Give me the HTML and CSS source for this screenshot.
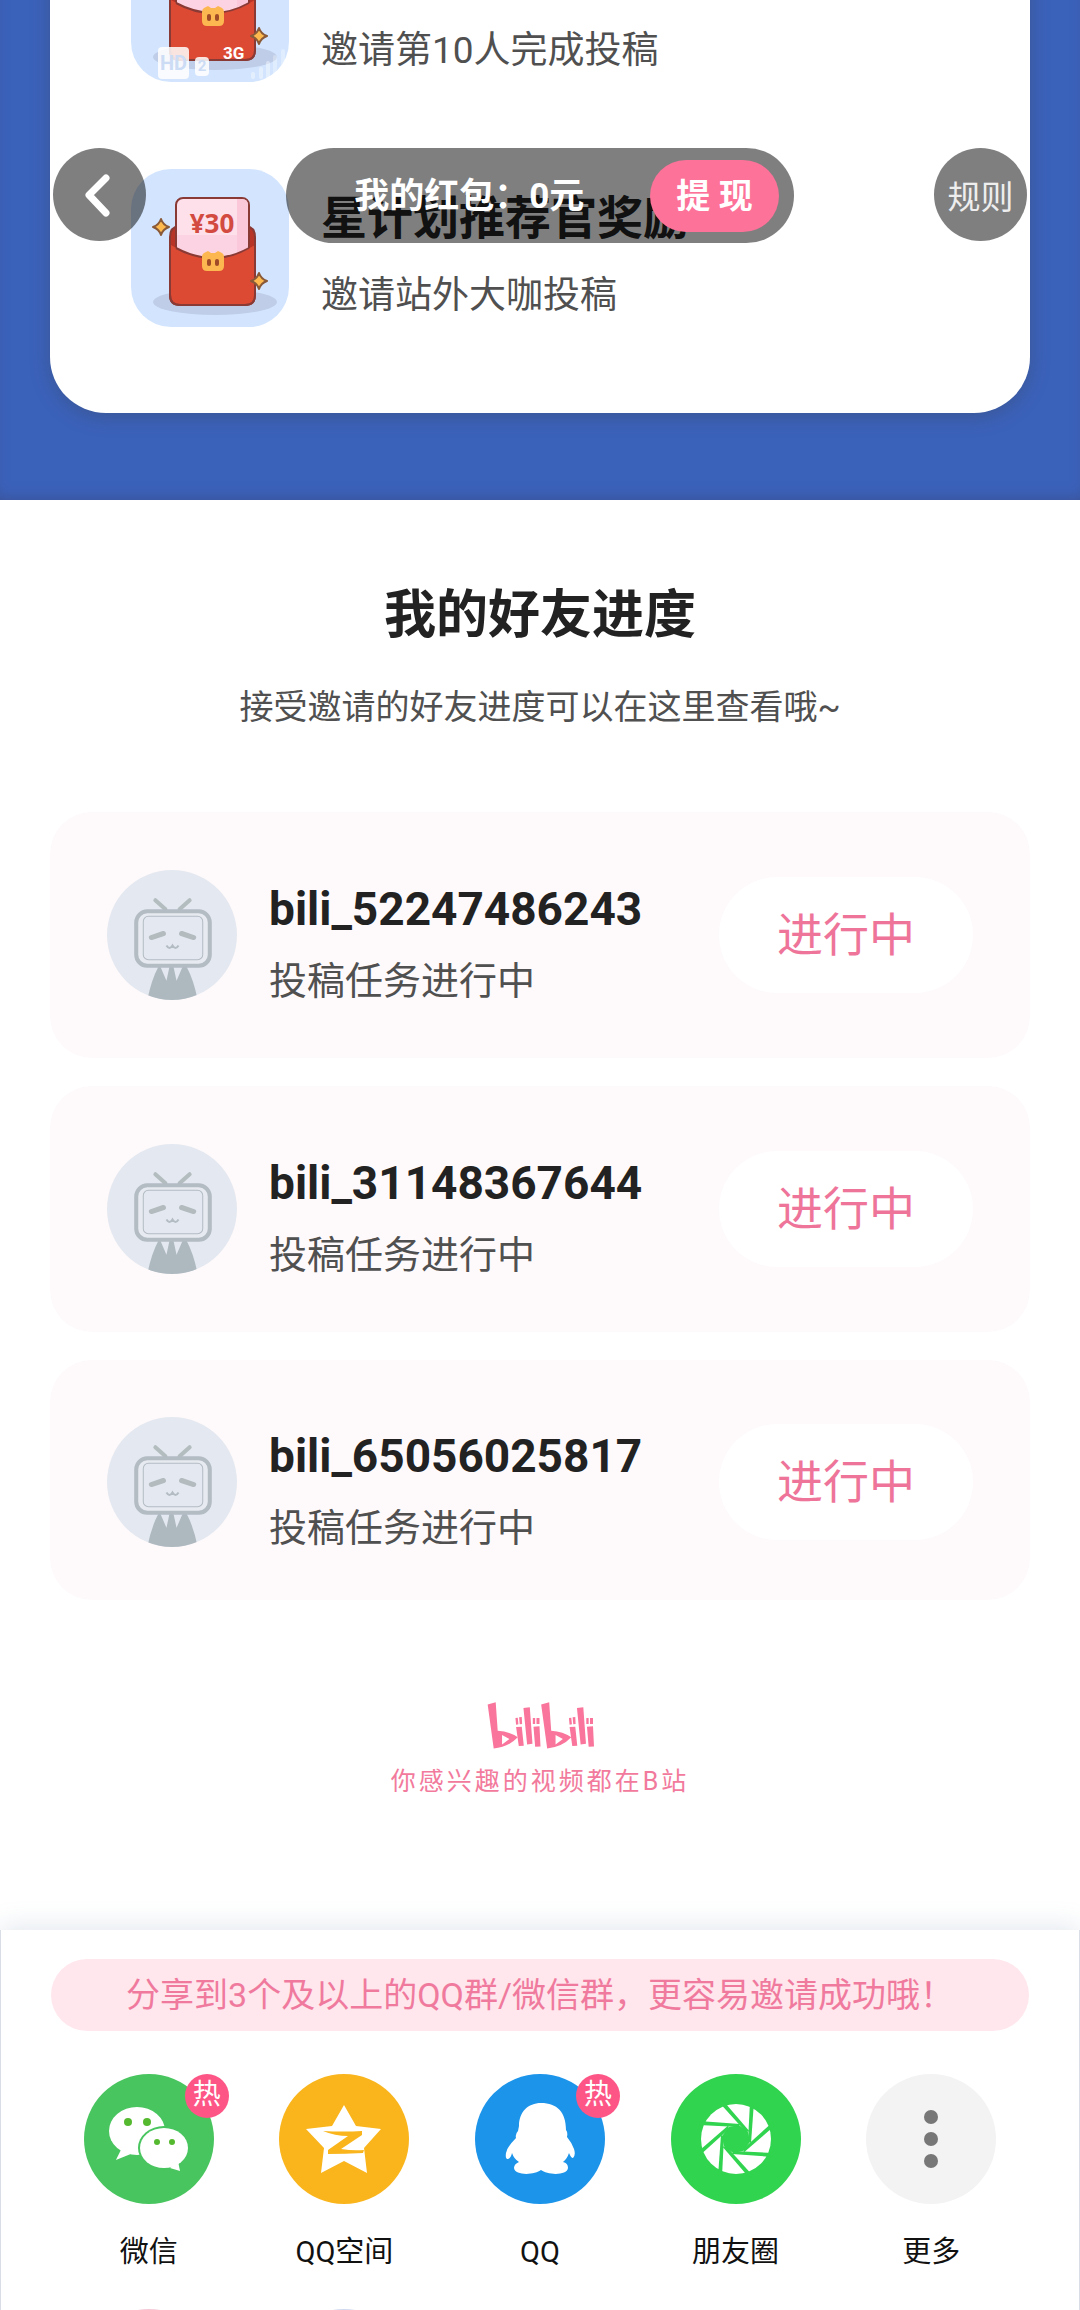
FILE: index.html
```html
<!DOCTYPE html>
<html lang="zh-CN">
<head>
  <meta charset="UTF-8" />
  <meta name="viewport" content="width=device-width, initial-scale=1.0" />
  <title>我的好友进度</title>
  <link rel="stylesheet" href="styles.css">
</head>
<body>
  <!-- shared drawings -->
  <svg class="defs" aria-hidden="true">
    <symbol id="packet" viewBox="0 0 158 158">
      <ellipse cx="84" cy="133" rx="62" ry="13" fill="#bfcde9"/>
      <path d="M39 68q0-10 9-11h67q9 1 9 11v58q0 10-10 10H49q-10 0-10-10z" fill="#b83426" stroke="#8a3a35" stroke-width="2"/>
      <rect x="45" y="29" width="73" height="76" rx="7" fill="#fde0ea" stroke="#8a3a35" stroke-width="2"/>
      <path d="M106 30h5q6 0 6 6v48h-11z" fill="#fac8d9"/>
      <path d="M46 66h71v30H46z" fill="#fbc5dc" opacity=".5"/>
      <path d="M40 76q42 26 84 0v50q0 9-10 9H50q-10 0-10-9z" fill="#dc4a34"/>
      <path d="M45 79q37 20 73 0" fill="none" stroke="#8a3a35" stroke-width="2"/>
      <path d="M39 70v56q0 10 10 10h65q10 0 10-10V70" fill="none" stroke="#8a3a35" stroke-width="2"/>
      <path d="M73 84l4-2 3 2h4l3-2 4 2q2 1 2 4v9q0 5-5 5H76q-5 0-5-5v-9q0-3 2-4z" fill="#fcb750"/>
      <rect x="76" y="90" width="4" height="7" rx="2" fill="#a04a28"/>
      <rect x="84" y="90" width="4" height="7" rx="2" fill="#a04a28"/>
      <path id="spark" d="M30 50q2 6 8 8-6 2-8 8-2-6-8-8 6-2 8-8z" fill="#fdb94e" stroke="#8a5a38" stroke-width="2" stroke-linejoin="round"/>
      <use href="#spark" x="98" y="54"/>
    </symbol>
    <symbol id="tv" viewBox="0 0 129 129">
      <path d="M48 30l10 9M82 30l-10 9" stroke="#b3bdbf" stroke-width="4" stroke-linecap="round"/>
      <path d="M51 96q-7 13-11 33h50q-4-20-11-33h-4l-6 14-3-14h-4l-3 14-6-14z" fill="#aeb9bf"/>
      <rect x="29" y="41" width="73" height="54" rx="11" fill="#e7ebf1" stroke="#b3bbc3" stroke-width="4"/>
      <rect x="36" y="46" width="59" height="43" rx="5" fill="#e4e9f1" stroke="#b3bbc3"/>
      <path d="M44 67l12-4M74 63l12 4" stroke="#b3bbbf" stroke-width="5" stroke-linecap="round"/>
      <path d="M59 75q3 5 6 0 3 5 6 0" fill="none" stroke="#b3bbc3" stroke-width="2"/>
    </symbol>
  </svg>

  <main class="content">
    <section class="rewards">
      <ul class="reward-list">
        <li class="reward">
          <svg class="reward-icon"><use href="#packet"/></svg>
          <div class="reward-text">
            <p>邀请第10人完成投稿</p>
          </div>
        </li>
        <li class="reward">
          <svg class="reward-icon"><use href="#packet"/><text class="amount" x="81" y="64">¥30</text></svg>
          <div class="reward-text">
            <h3>星计划推荐官奖励</h3>
            <p>邀请站外大咖投稿</p>
          </div>
        </li>
      </ul>
    </section>

    <section class="friends">
      <h2>我的好友进度</h2>
      <p class="subtitle">接受邀请的好友进度可以在这里查看哦~</p>
      <ul class="friend-list">
        <li class="friend">
          <svg class="avatar"><use href="#tv"/></svg>
          <div class="friend-text">
            <h3>bili_52247486243</h3>
            <p>投稿任务进行中</p>
          </div>
          <span class="state">进行中</span>
        </li>
        <li class="friend">
          <svg class="avatar"><use href="#tv"/></svg>
          <div class="friend-text">
            <h3>bili_31148367644</h3>
            <p>投稿任务进行中</p>
          </div>
          <span class="state">进行中</span>
        </li>
        <li class="friend">
          <svg class="avatar"><use href="#tv"/></svg>
          <div class="friend-text">
            <h3>bili_65056025817</h3>
            <p>投稿任务进行中</p>
          </div>
          <span class="state">进行中</span>
        </li>
      </ul>
    </section>

    <footer class="brand">
      <svg class="logo" viewBox="18 30 320 145" role="img" aria-label="bilibili">
        <g id="half" fill="#f9759b">
          <path fill-rule="evenodd" d="M20 40l24-7 6 85q36 2 60 20-28 30-72 33zM63 131v28l22-16z"/>
          <path d="M105 107l17-1 6 57-15 1zM103 80l7-1 2 20-7 1zM114 78l8-1 1 21-7 1zM127 50l19-2 8 109-16 2zM157 106l18-1 3 60-16 1zM155 80h7v18h-7zM166 80h9v18h-9z"/>
        </g>
        <use href="#half" x="160"/>
      </svg>
      <p>你感兴趣的视频都在B站</p>
    </footer>
  </main>

  <section class="share">
    <p class="tip">分享到3个及以上的QQ群/微信群，更容易邀请成功哦！</p>
    <div class="share-grid">
      <button class="share-item">
        <span class="circle wechat">
          <svg viewBox="0 0 130 130">
            <path d="M38 76l-4 8 10-4z" fill="#fff" stroke="#fff" stroke-width="2"/>
            <ellipse cx="53" cy="57" rx="28" ry="24" fill="#fff"/>
            <circle cx="44" cy="48" r="4" fill="#55b92f"/><circle cx="63" cy="48" r="4" fill="#55b92f"/>
            <ellipse cx="80" cy="74" rx="26" ry="22" fill="#48c55e"/>
            <ellipse cx="80" cy="74" rx="24" ry="20" fill="#fff"/>
            <path d="M86 94l10 3-2-10z" fill="#fff"/>
            <circle cx="73" cy="68" r="3" fill="#55b92f"/><circle cx="88" cy="68" r="3" fill="#55b92f"/>
          </svg>
          <em class="hot">热</em>
        </span>
        微信
      </button>
      <button class="share-item">
        <span class="circle qzone">
          <svg viewBox="0 0 130 130">
            <path d="M65 31l12 21 25 3-17 19 3 25-23-12-23 12 3-25-18-19 26-3z" fill="#fff"/>
            <path d="M44 57q20 1 39 0v4L62 75q12 2 23 1l-1 3q-18 1-35 1v-4l20-14q-13 0-25-5z" fill="#f9b51b"/>
          </svg>
        </span>
        QQ空间
      </button>
      <button class="share-item">
        <span class="circle qq">
          <svg viewBox="0 0 130 130">
            <path d="M66 29c-13 0-22 9-22 23l-1 5q-3 3-2 7-9 9-10 15-1 6 2 6 3-1 4-6 2 6 7 9-5 2-5 6c1 8 21 7 27 2 6 5 26 6 27-2q0-5-5-6 4-3 6-9 2 5 4 5 3-3 1-9-2-6-7-12 1-5-1-7c0-18-9-27-25-27z" fill="#fff"/>
          </svg>
          <em class="hot">热</em>
        </span>
        QQ
      </button>
      <button class="share-item">
        <span class="circle moments">
          <svg viewBox="-65 -65 130 130">
            <circle r="35" fill="#fff"/>
            <g fill="#30d44e">
              <path d="M14 3L7 12-3 14-12 7-14-3-7-12 3-14 12-7z"/>
              <path id="blade" d="M14-37h4L15 4l-3-2z"/>
              <use href="#blade" transform="rotate(45)"/>
              <use href="#blade" transform="rotate(90)"/>
              <use href="#blade" transform="rotate(135)"/>
              <use href="#blade" transform="rotate(180)"/>
              <use href="#blade" transform="rotate(225)"/>
              <use href="#blade" transform="rotate(270)"/>
              <use href="#blade" transform="rotate(315)"/>
            </g>
          </svg>
        </span>
        朋友圈
      </button>
      <button class="share-item">
        <span class="circle more">
          <svg viewBox="0 0 130 130" fill="#777">
            <circle cx="65" cy="43" r="7"/><circle cx="65" cy="65" r="7"/><circle cx="65" cy="87" r="7"/>
          </svg>
        </span>
        更多
      </button>
    </div>
    <!-- second row, only its top edge shows -->
    <div class="share-grid peek">
      <span class="circle pink"></span>
      <span class="circle blue"></span>
    </div>
  </section>

  <div class="status">
    <span class="hd">HD</span>
    <span class="sim">2</span>
    <span class="net">3G</span>
    <svg class="signal" viewBox="0 0 38 30" fill="#fff">
      <rect x="1" y="23" width="4" height="7" rx="2" opacity=".4"/>
      <rect x="9" y="18" width="4" height="12" rx="2" opacity=".4"/>
      <rect x="16" y="12" width="4" height="18" rx="2" opacity=".4"/>
      <rect x="23" y="6" width="4" height="24" rx="2" opacity=".3"/>
      <rect x="31" y="0" width="4" height="30" rx="2" opacity=".3"/>
    </svg>
  </div>

  <nav class="topbar">
    <button class="round" aria-label="返回">
      <svg viewBox="0 0 93 93"><path d="M53 30L36 47l17 18" fill="none" stroke="#fff" stroke-width="7" stroke-linecap="round" stroke-linejoin="round"/></svg>
    </button>
    <div class="wallet">
      <span>我的红包：0元</span>
      <button class="withdraw">提 现</button>
    </div>
    <button class="round">规则</button>
  </nav>
</body>
</html>
```

FILE: styles.css
```css
* {
  box-sizing: border-box;
  margin: 0;
  padding: 0;
}

body {
  position: relative;
  display: flex;
  flex-direction: column;
  height: 100vh;
  overflow: hidden;
  background: #fff;
  color: #222;
  font-family: Roboto, "Noto Sans CJK SC", sans-serif;
}

ul {
  list-style: none;
}

button {
  border: none;
  background: none;
  font-family: inherit;
  cursor: pointer;
}

.defs {
  position: absolute;
  width: 0;
  height: 0;
}

.content {
  flex: 1;
  min-height: 0;
  overflow: hidden;
}

/* rewards */
.rewards {
  padding: 0 50px 87px;
  background: #3b62bb;
  box-shadow: inset 0 -8px 16px -8px rgba(60, 60, 100, 0.5);
}

.reward-list {
  display: flex;
  flex-direction: column;
  gap: 87px;
  margin-top: -76px;
  padding: 0 81px 86px;
  background: #fff;
  border-radius: 0 0 56px 56px;
  box-shadow: 0 4px 20px rgba(60, 60, 60, 0.3);
}

.reward {
  display: flex;
  gap: 32px;
}

.reward-icon {
  flex: none;
  width: 158px;
  height: 158px;
  border-radius: 40px;
  background: #d3e5fe;
}

.amount {
  fill: #d34a40;
  font-family: "Open Sans", sans-serif;
  font-size: 26px;
  font-weight: 700;
  text-anchor: middle;
}

.reward-text {
  display: flex;
  flex-direction: column;
  justify-content: flex-end;
  gap: 26px;
  padding-bottom: 9px;
}

.reward-text h3 {
  font-size: 46px;
  line-height: 60px;
}

.reward-text p,
.friend-text p {
  color: #505050;
  font-size: 37px;
  line-height: 44px;
}

/* friends */
.friends {
  padding: 78px 50px 0;
}

.friends h2 {
  font-size: 52px;
  line-height: 76px;
  text-align: center;
}

.subtitle {
  margin-top: 28px;
  color: #505050;
  font-size: 34px;
  line-height: 50px;
  text-align: center;
}

.friend-list {
  display: flex;
  flex-direction: column;
  gap: 28px;
  margin-top: 80px;
}

.friend {
  display: flex;
  align-items: center;
  gap: 32px;
  height: 246px;
  padding: 0 57px;
  border-radius: 42px;
  background: #fefafb;
}

.friend:last-child {
  height: 240px;
  padding-top: 4px;
}

.avatar {
  flex: none;
  width: 130px;
  height: 130px;
  border-radius: 50%;
  background: #e4e8f0;
}

.friend-text {
  flex: 1;
  padding-top: 12px;
}

.friend-text h3 {
  margin-bottom: 20px;
  font-size: 46px;
  line-height: 60px;
}

.friend-text p {
  font-size: 38px;
}

.state {
  padding: 0 58px;
  border-radius: 58px;
  background: #fff;
  color: #ee7499;
  font-size: 46px;
  line-height: 116px;
}

/* brand */
.brand {
  margin-top: 101px;
  color: #f27a9c;
  text-align: center;
}

.logo {
  display: block;
  width: 107px;
  height: 49px;
  margin: 0 auto 12px;
}

.brand p {
  font-size: 25px;
  letter-spacing: 3px;
  line-height: 40px;
}

/* share sheet */
.share {
  flex: none;
  padding: 29px 50px 0;
  border: solid #d9dee6;
  border-width: 0 1px;
  background: #fff;
  box-shadow: 0 -4px 24px rgba(120, 145, 175, 0.2);
}

.tip {
  border-radius: 36px;
  background: #ffe7ed;
  color: #f07a9e;
  font-size: 34px;
  line-height: 72px;
  text-align: center;
  white-space: nowrap;
}

.share-grid {
  display: grid;
  grid-template-columns: repeat(5, 1fr);
  justify-items: center;
  margin-top: 43px;
}

.share-item {
  display: flex;
  flex-direction: column;
  align-items: center;
  gap: 28px;
  color: #111;
  font-size: 29px;
  line-height: 40px;
}

.circle {
  position: relative;
  width: 130px;
  height: 130px;
  border-radius: 50%;
}

.circle svg {
  display: block;
}

.wechat { background: #48c55e; }
.qzone { background: #f9b51b; }
.qq { background: #1c94ea; }
.moments { background: #30d44e; }
.more { background: #f3f3f3; }
.pink { background: #f3c9d6; }
.blue { background: #cfd9f0; }

.hot {
  position: absolute;
  top: 0;
  right: -15px;
  width: 44px;
  height: 44px;
  border-radius: 50%;
  background: #fd5686;
  color: #fff;
  font-size: 28px;
  font-style: normal;
  line-height: 42px;
  text-align: center;
}

.peek {
  height: 1px;
  margin-top: 37px;
  overflow: hidden;
}

/* floating bars */
.status {
  position: absolute;
  top: 45px;
  left: 158px;
  display: flex;
  align-items: flex-end;
  gap: 6px;
  height: 34px;
  color: #fff;
  font-weight: 700;
}

.hd,
.sim {
  border-radius: 4px;
  background: rgba(255, 255, 255, 0.85);
  color: #cddcf5;
  text-align: center;
}

.hd {
  width: 31px;
  font-size: 20px;
  line-height: 32px;
}

.sim {
  width: 14px;
  margin-bottom: 3px;
  font-size: 15px;
  line-height: 19px;
}

.net {
  align-self: flex-start;
  margin-left: 8px;
  font-size: 17px;
  line-height: 17px;
}

.signal {
  width: 38px;
  height: 30px;
}

.topbar {
  position: absolute;
  top: 148px;
  right: 53px;
  left: 53px;
  display: flex;
  justify-content: space-between;
}

.round {
  width: 93px;
  height: 93px;
  border-radius: 50%;
  background: rgba(0, 0, 0, 0.5);
  color: #eee;
  font-size: 33px;
}

.round svg {
  display: block;
}

.wallet {
  display: flex;
  align-items: center;
  gap: 66px;
  height: 95px;
  padding: 0 15px 0 68px;
  border-radius: 48px;
  background: rgba(0, 0, 0, 0.5);
  color: #fff;
  font-size: 35px;
  font-weight: 700;
}

.wallet span {
  padding-bottom: 6px;
}

.withdraw {
  padding: 0 26px;
  border-radius: 36px;
  background: #fc7299;
  color: #fff;
  font-size: 34px;
  font-weight: 700;
  line-height: 72px;
}
```
